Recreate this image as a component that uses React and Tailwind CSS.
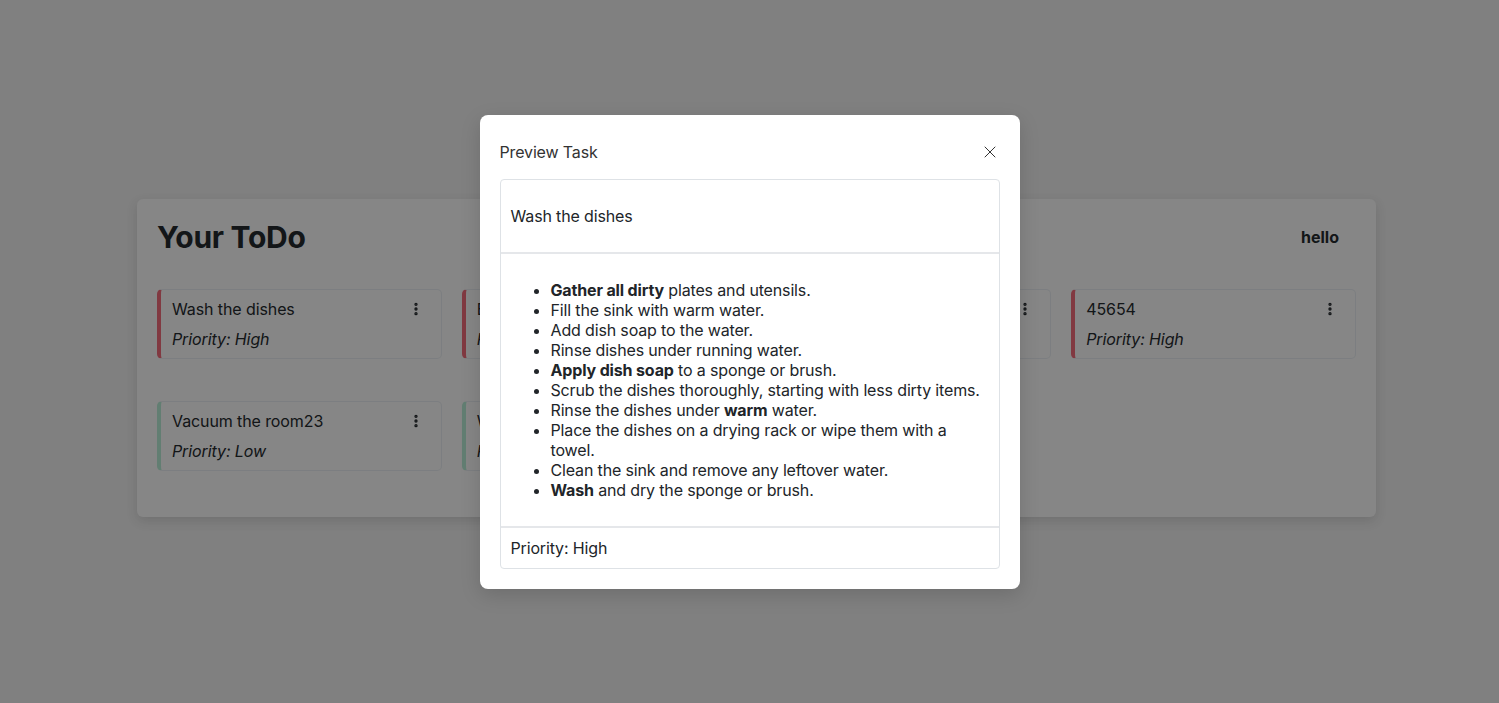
import { EllipsisVertical, X } from 'lucide-react'

const tasks = [
  { title: 'Wash the dishes', priority: 'High' },
  { title: 'Buy groceries', priority: 'High' },
  { title: 'Finish the report', priority: 'High' },
  { title: '45654', priority: 'High' },
  { title: 'Vacuum the room23', priority: 'Low' },
  { title: 'Water the plants', priority: 'Low' },
]

const steps = [
  [<b key="b">Gather all dirty</b>, ' plates and utensils.'],
  ['Fill the sink with warm water.'],
  ['Add dish soap to the water.'],
  ['Rinse dishes under running water.'],
  [<b key="b">Apply dish soap</b>, ' to a sponge or brush.'],
  ['Scrub the dishes thoroughly, starting with less dirty items.'],
  ['Rinse the dishes under ', <b key="b">warm</b>, ' water.'],
  ['Place the dishes on a drying rack or wipe them with a towel.'],
  ['Clean the sink and remove any leftover water.'],
  [<b key="b">Wash</b>, ' and dry the sponge or brush.'],
]

function TaskCard({ task }) {
  const high = task.priority === 'High'
  return (
    <div
      className={`flex h-[70px] items-start justify-between rounded-[5px] border border-[#cfd3d7] border-l-4 bg-[#dfdfdf] pb-[9px] pl-[11px] pr-[17px] pt-[7px] ${
        high ? 'border-l-[#d8606d]' : 'border-l-[#a3d2be]'
      }`}
    >
      <div className="tracking-[-0.1px]">
        <p className="leading-6">{task.title}</p>
        <p className="mt-1.5 italic leading-6">Priority: {task.priority}</p>
      </div>
      <EllipsisVertical className="mt-1" size={16} strokeWidth={3} />
    </div>
  )
}

export default function App() {
  return (
    <div className="relative h-[703px] overflow-hidden bg-[#d5d5d5] font-['Inter',sans-serif] text-[#212529]">
      <div className="ml-[137px] mt-[199px] w-[1239px] rounded-md bg-[#dfdfdf] px-5 pb-[46px] pt-[20px] shadow-[0_4px_12px_rgba(0,0,0,0.12)]">
        <div className="flex items-center justify-between">
          <h1 className="text-[30px] font-bold leading-9 tracking-[-0.3px]">Your ToDo</h1>
          <span className="mr-[17px] font-bold">hello</span>
        </div>
        <div className="mt-[34px] grid grid-cols-4 gap-x-5 gap-y-[42px]">
          {tasks.map((task) => (
            <TaskCard key={task.title} task={task} />
          ))}
        </div>
      </div>

      <div className="absolute inset-0 flex items-center justify-center bg-black/40">
        <div className="w-[540px] rounded-lg bg-white px-5 pb-5 pt-[25px] tracking-[-0.15px] text-[#212529] shadow-[0_6px_20px_rgba(0,0,0,0.15)]">
          <div className="flex items-center justify-between pb-[15px]">
            <h2 className="leading-6 text-[#333]">Preview Task</h2>
            <X className="text-[#333]" size={20} strokeWidth={1.2} />
          </div>
          <div className="rounded border border-[#dee2e6]">
            <div className="border-b-2 border-[#e5e7ea] px-2.5 py-6 leading-6">Wash the dishes</div>
            <div className="px-2.5 py-[26px]">
              <ul className="list-disc pl-10 leading-5">
                {steps.map((parts, index) => (
                  <li key={index}>{parts}</li>
                ))}
              </ul>
            </div>
            <div className="border-t-2 border-[#e5e7ea] px-2.5 py-2 leading-6">Priority: High</div>
          </div>
        </div>
      </div>
    </div>
  )
}
